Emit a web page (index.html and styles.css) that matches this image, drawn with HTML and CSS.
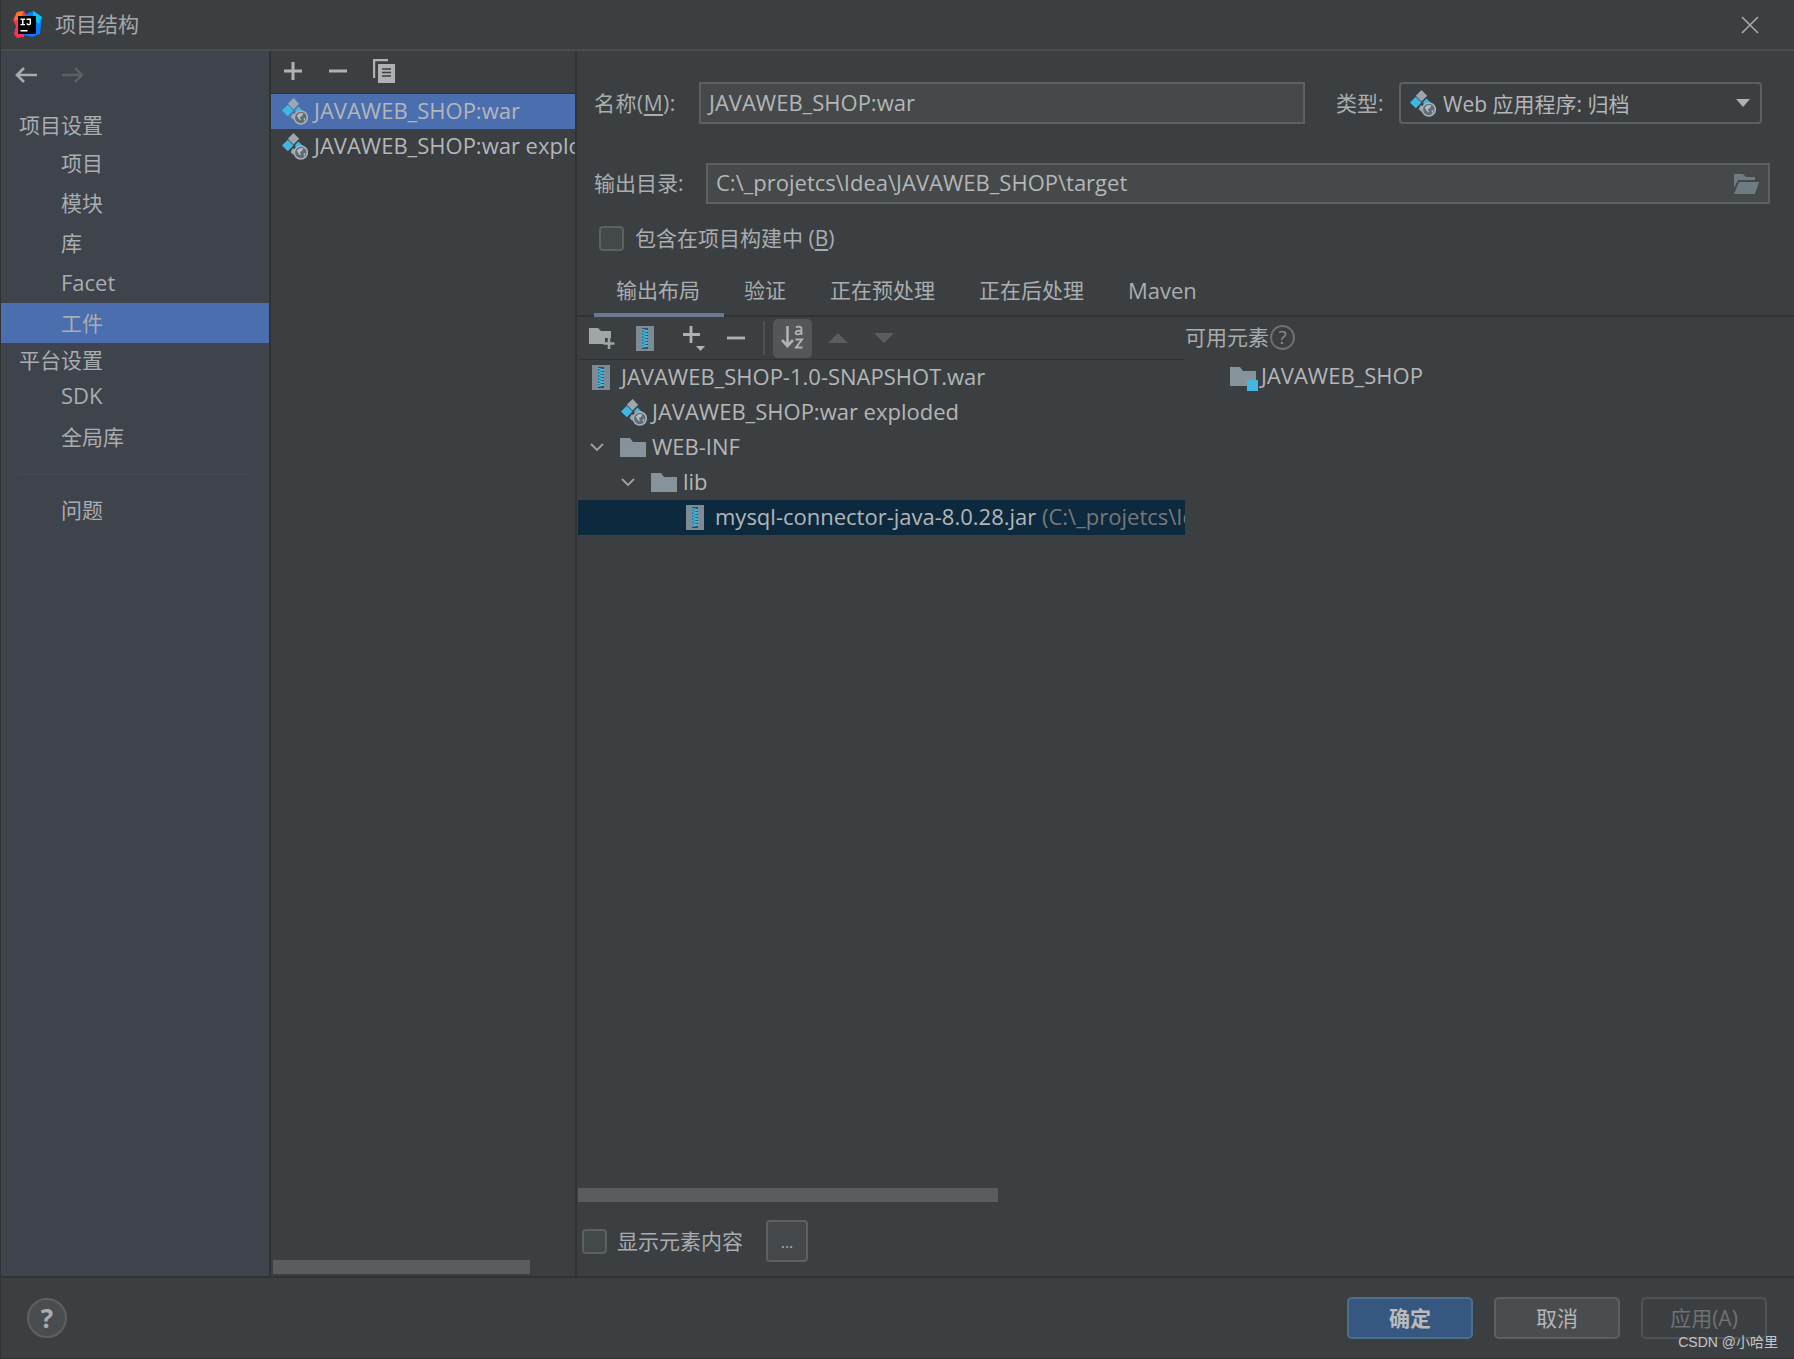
FILE: index.html
```html
<!DOCTYPE html>
<html lang="zh-CN">
<head>
<meta charset="utf-8">
<title>项目结构</title>
<link rel="stylesheet" href="styles.css">
</head>
<body>
<svg class="defs" width="0" height="0">
  <symbol id="artifact" viewBox="0 0 26 27">
    <path d="M11.500 0l5.700 5.700-5.700 5.700-5.700-5.700z" fill="#9aa7b0"/>
    <path d="M5.800 6.800l5.700 5.700-5.700 5.700L0 12.500z" fill="#40b6e0"/>
    <path d="M13 12l3.500-3.500 5.500 5.500c-3-1-6-.5-8 1z" fill="#40b6e0"/>
    <path d="M11 15l1.500 1.500-1 5.500-3-3z" fill="#9aa7b0"/>
    <circle cx="18.800" cy="19.500" r="6.500" fill="#5f6c77" stroke="#a6b1b9" stroke-width="1.600"/>
    <path d="M14.800 17.500l3-2.500 3.500.3-1.300 2.700-2 1 1 3.500-2.200-1.200zM21.500 20.500l2.200-.5-1.500 3.800z" fill="#b3bcc3"/>
  </symbol>
  <symbol id="jar" viewBox="0 0 18 25">
    <path d="M0 0h18v25H0z" fill="#7f8b94"/>
    <path d="M6 2h6v21H6z" fill="#3b4a55"/>
    <path d="M6 3.500l6 1.500-6 1.500 6 1.500-6 1.500 6 1.500-6 1.500 6 1.500-6 1.500 6 1.500-6 1.500 6 1.500-6 1" fill="none" stroke="#40b6e0" stroke-width="1.600"/>
  </symbol>
  <symbol id="folder" viewBox="0 0 26 19">
    <path d="M0 0h10l3 4h13v15H0z" fill="#87939a"/>
  </symbol>
  <symbol id="chev" viewBox="0 0 14 9">
    <path d="M1 1l6 6 6-6" fill="none" stroke="#9ea1a3" stroke-width="1.800"/>
  </symbol>
</svg>

<div class="window">
  <header class="titlebar">
    <svg class="logo" viewBox="0 0 29 27" width="29" height="27">
      <path d="M4 1l7-1 3 6-3 20-7 1-3-4 2-8-3-6z" fill="#fe315d"/>
      <path d="M1 9l3-8 6-1-2 9z" fill="#f97a12"/>
      <path d="M13 3l8-3 8 6-2 17-8 3-8-2z" fill="#087cfa"/>
      <path d="M20 0l9 6-3 7-6-5z" fill="#07c3f2"/>
      <path d="M5 5h18v18H5z" fill="#000"/>
      <path d="M7.500 7.500h4.500v1.400h-1.500v4H12v1.400H7.500v-1.400H9v-4H7.500zM13.500 7.500h4.500v5c0 1-.7 1.800-2.300 1.800s-2.200-.7-2.200-1.800l1.400-.3c0 .5.200.8.800.8s.9-.3.900-.8V8.900h-3.100zM7.500 19h7v1.400h-7z" fill="#fff"/>
    </svg>
    <span class="title-text">项目结构</span>
    <svg class="close" viewBox="0 0 18 18" width="18" height="18"><path d="M1 1l16 16M17 1L1 17" stroke="#a9abad" stroke-width="1.600"/></svg>
  </header>

  <div class="main">
    <nav class="sidebar">
      <div class="nav-arrows">
        <svg viewBox="0 0 24 18" width="24" height="18"><path d="M23 9H3M10 2L3 9l7 7" fill="none" stroke="#a9abad" stroke-width="2.600"/></svg>
        <svg viewBox="0 0 24 18" width="24" height="18"><path d="M1 9h20M14 2l7 7-7 7" fill="none" stroke="#5c5f61" stroke-width="2.600"/></svg>
      </div>
      <div class="nav-head nav-first">项目设置</div>
      <div class="nav-item">项目</div>
      <div class="nav-item">模块</div>
      <div class="nav-item">库</div>
      <div class="nav-item nav-latin">Facet</div>
      <div class="nav-item nav-selected">工件</div>
      <div class="nav-head nav-second">平台设置</div>
      <div class="nav-item nav-latin nav-sdk">SDK</div>
      <div class="nav-item nav-global">全局库</div>
      <div class="nav-sep"></div>
      <div class="nav-item">问题</div>
    </nav>

    <section class="artifacts">
      <div class="mini-toolbar">
        <svg viewBox="0 0 20 20" width="20" height="20"><path d="M10 1v18M1 10h18" stroke="#afb1b3" stroke-width="3"/></svg>
        <svg viewBox="0 0 20 20" width="20" height="20"><path d="M1 10h18" stroke="#afb1b3" stroke-width="3"/></svg>
        <svg viewBox="0 0 22 24" width="22" height="24"><path d="M1 19V1h14" fill="none" stroke="#afb1b3" stroke-width="2.400"/><path d="M5 5h17v19H5z" fill="#afb1b3"/><path d="M9 10h9M9 13.500h9M9 17h9" stroke="#3c3f41" stroke-width="1.600"/></svg>
      </div>
      <div class="artifact-list">
        <div class="artifact-row artifact-selected"><svg class="ico-art"><use href="#artifact"/></svg><span>JAVAWEB_SHOP:war</span></div>
        <div class="artifact-row"><svg class="ico-art"><use href="#artifact"/></svg><span>JAVAWEB_SHOP:war exploded</span></div>
      </div>
      <div class="scrollbar scroll-mid"></div>
    </section>

    <section class="details">
      <div class="form-row row-name">
        <label class="lbl lbl-name">名称(<u>M</u>):</label>
        <div class="field field-name"><span>JAVAWEB_SHOP:war</span></div>
        <label class="lbl lbl-type">类型:</label>
        <div class="combo"><svg class="ico-combo"><use href="#artifact"/></svg><span class="combo-text">Web 应用程序: 归档</span>
          <svg class="combo-arrow" viewBox="0 0 14 8" width="14" height="8"><path d="M0 0h14L7 8z" fill="#afb1b3"/></svg>
        </div>
      </div>
      <div class="form-row row-out">
        <label class="lbl lbl-out">输出目录:</label>
        <div class="field field-out"><span>C:\_projetcs\Idea\JAVAWEB_SHOP\target</span>
          <svg viewBox="0 0 26 20" width="26" height="20"><path d="M1 0h9l3 3h9v3H5L1 14z" fill="#6f7b82"/><path d="M6 8h20l-4 12H1z" fill="#6f7b82"/></svg>
        </div>
      </div>
      <div class="check-row row-include"><span class="checkbox"></span><span>包含在项目构建中 (<u>B</u>)</span></div>

      <div class="tabs">
        <div class="tab tab-active">输出布局</div>
        <div class="tab">验证</div>
        <div class="tab">正在预处理</div>
        <div class="tab">正在后处理</div>
        <div class="tab tab-latin">Maven</div>
      </div>

      <div class="split">
        <div class="layout-pane">
          <div class="layout-toolbar">
            <svg class="t-new" viewBox="0 0 26 22" width="26" height="22"><path d="M0 1h9l3 3h10v7h-6v6H0z" fill="#a0a5a8"/><path d="M20 11v11M14.500 16.500h11" stroke="#a0a5a8" stroke-width="2.600"/></svg>
            <svg class="t-jar"><use href="#jar"/></svg>
            <span class="t-add"><svg viewBox="0 0 24 26" width="24" height="26"><path d="M9 1v17M1 9.500h17" stroke="#afb1b3" stroke-width="2.800"/><path d="M14 21h9l-4.500 5z" fill="#afb1b3"/></svg></span>
            <svg class="t-minus" viewBox="0 0 18 4" width="18" height="4"><path d="M0 2h18" stroke="#afb1b3" stroke-width="2.800"/></svg>
            <span class="t-sep"></span>
            <span class="t-sort"><svg viewBox="0 0 24 26" width="24" height="26"><path d="M6.500 1v20M1 15l5.500 6 5.500-6" fill="none" stroke="#afb1b3" stroke-width="2.600"/><path d="M15 2.500c1-1 5.500-1.500 5.500 1.500v6M20 6c-2-.5-5.500-.3-5.500 1.800s4 2 5.500 0" fill="none" stroke="#afb1b3" stroke-width="1.800"/><path d="M14.500 14.500h6.500l-6 8h6.500" fill="none" stroke="#afb1b3" stroke-width="2"/></svg></span>
            <svg class="t-up" viewBox="0 0 20 10" width="20" height="10"><path d="M0 10L10 0l10 10z" fill="#5a5d5f"/></svg>
            <svg class="t-down" viewBox="0 0 20 10" width="20" height="10"><path d="M0 0l10 10L20 0z" fill="#5a5d5f"/></svg>
          </div>
          <div class="tree">
            <div class="tree-row level-war"><svg class="ico-jar"><use href="#jar"/></svg><span>JAVAWEB_SHOP-1.0-SNAPSHOT.war</span></div>
            <div class="tree-row level-exp"><svg class="ico-art-s"><use href="#artifact"/></svg><span>JAVAWEB_SHOP:war exploded</span></div>
            <div class="tree-row level-web"><svg class="ico-chev"><use href="#chev"/></svg><svg class="ico-folder"><use href="#folder"/></svg><span>WEB-INF</span></div>
            <div class="tree-row level-lib"><svg class="ico-chev"><use href="#chev"/></svg><svg class="ico-folder"><use href="#folder"/></svg><span>lib</span></div>
            <div class="tree-row level-jar tree-selected"><svg class="ico-jar"><use href="#jar"/></svg><span>mysql-connector-java-8.0.28.jar <em class="path">(C:\_projetcs\Idea\JAVAWEB_SHOP\target)</em></span></div>
          </div>
          <div class="scrollbar scroll-tree"></div>
          <div class="check-row row-show"><span class="checkbox"></span><span>显示元素内容</span><span class="dots-btn">...</span></div>
        </div>
        <div class="avail-pane">
          <div class="avail-head"><span>可用元素</span><span class="help-small">?</span></div>
          <div class="avail-row">
            <span class="avail-icon"><svg class="ico-folder"><use href="#folder"/></svg><span class="module-dot"></span></span>
            <span class="avail-name">JAVAWEB_SHOP</span>
          </div>
        </div>
      </div>
    </section>
  </div>

  <footer class="footer">
    <span class="help-btn">?</span>
    <div class="buttons">
      <span class="btn btn-ok">确定</span>
      <span class="btn btn-cancel">取消</span>
      <span class="btn btn-apply">应用(A)</span>
    </div>
    <span class="watermark">CSDN @小哈里</span>
  </footer>
</div>
</body>
</html>
```
FILE: styles.css
```css
* { box-sizing: border-box; }
html, body { margin: 0; padding: 0; }
body {
  width: 1794px;
  height: 1359px;
  overflow: hidden;
  background: #3c3f41;
  color: #a9adb0;
  font-family: "Open Sans", "Noto Sans CJK SC", sans-serif;
  font-size: 22px;
  line-height: 1;
}
.defs { position: absolute; }
svg { display: block; flex: none; }
u { text-underline-offset: 3px; }

.window {
  display: flex;
  flex-direction: column;
  width: 1794px;
  height: 1359px;
  border-left: 1px solid #323232;
  border-bottom: 1px solid #323232;
}

.titlebar {
  display: flex;
  align-items: center;
  height: 51px;
  flex: none;
  padding: 0 35px 0 12px;
  border-bottom: 2px solid #4c4c4c;
}
.title-text { margin-left: 13px; font-size: 21px; color: #a5a8aa; }
.close { margin-left: auto; }

.main { display: flex; height: 1225px; flex: none; }

.sidebar {
  width: 270px;
  flex: none;
  background: #3e434c;
  border-right: 2px solid #323232;
}
.nav-arrows {
  display: flex;
  gap: 23px;
  padding: 15px 0 0 13px;
  height: 56px;
}
.nav-head { height: 36px; padding-left: 18px; display: flex; align-items: center; font-size: 21px; }
.nav-second { height: 34px; }
.nav-item { height: 40px; padding-left: 60px; display: flex; align-items: center; font-size: 21px; }
.nav-latin { font-size: 22px; padding-bottom: 2px; }
.nav-sdk { height: 38px; }
.nav-global { height: 44px; }
.nav-selected { background: #4b6eaf; }
.nav-sep { height: 1px; margin: 15px 17px 15px 16px; background: #454a52; }

.artifacts {
  width: 306px;
  flex: none;
  display: flex;
  flex-direction: column;
  border-right: 2px solid #323232;
  min-width: 0;
}
.mini-toolbar {
  display: flex;
  align-items: center;
  gap: 25px;
  height: 43px;
  padding: 0 0 3px 12px;
  flex: none;
  border-bottom: 1px solid #323232;
}
.artifact-list { flex: 1; overflow: hidden; }
.artifact-row {
  display: flex;
  align-items: center;
  height: 35px;
  padding-left: 11px;
  white-space: nowrap;
  gap: 6px;
  overflow: hidden;
  color: #b4b6b8;
}
.artifact-row span { padding-bottom: 3px; }
.artifact-selected { background: #4b6eaf; }
.ico-art { width: 26px; height: 27px; }
.scrollbar { height: 14px; background: #5a5c5e; flex: none; }
.scroll-mid { width: 257px; margin: 0 0 2px 2px; }

.details { flex: 1; min-width: 0; display: flex; flex-direction: column; }
.form-row { display: flex; align-items: center; flex: none; }
.row-name { height: 42px; margin-top: 31px; }
.row-out { height: 41px; margin-top: 39px; }
.lbl { color: #a9adb0; white-space: nowrap; font-size: 21px; }
.lbl-name { margin-left: 17px; width: 105px; letter-spacing: .5px; }
.lbl-out { margin-left: 17px; width: 112px; }
.lbl-type { margin-left: 31px; width: 63px; }
.field {
  display: flex;
  align-items: center;
  background: #45494a;
  border: 2px solid #5e6060;
  padding: 0 8px;
  height: 100%;
  color: #b4b6b8;
  white-space: nowrap;
}
.field span { padding-bottom: 3px; }
.field-name { width: 606px; }
.field-out { width: 1064px; justify-content: space-between; padding-right: 9px; }
.combo {
  display: flex;
  align-items: center;
  width: 363px;
  height: 100%;
  border: 2px solid #5e6060;
  border-radius: 4px;
  padding: 0 9px 0 9px;
  color: #b4b6b8;
  white-space: nowrap;
}
.combo-text { font-size: 21px; padding-top: 2px; }
.ico-combo { width: 26px; height: 27px; margin-right: 7px; }
.combo-arrow { margin-left: auto; margin-right: 1px; }

.check-row { display: flex; align-items: center; flex: none; white-space: nowrap; font-size: 21px; }
.checkbox {
  width: 25px;
  height: 25px;
  flex: none;
  border: 2px solid #5e6060;
  border-radius: 4px;
  background: #43494a;
}
.row-include { height: 25px; margin: 22px 0 0 22px; gap: 11px; }

.tabs {
  display: flex;
  height: 47px;
  margin-top: 19px;
  flex: none;
  padding-left: 17px;
  border-bottom: 2px solid #323232;
}
.tab { padding: 10px 22px 0; height: 45px; font-size: 21px; white-space: nowrap; }
.tab-latin { font-size: 22px; padding-top: 9px; }
.tab-active { border-bottom: 4px solid #687a8f; height: 47px; padding-right: 24px; margin-right: -2px; }

.split { flex: 1; display: flex; min-height: 0; }
.layout-pane { width: 608px; flex: none; display: flex; flex-direction: column; min-width: 0; padding-left: 1px; }
.layout-toolbar {
  display: flex;
  align-items: center;
  height: 43px;
  flex: none;
  padding-left: 11px;
  border-bottom: 1px solid #323232;
}
.t-jar { width: 18px; height: 25px; margin-left: 21px; }
.t-add { margin-left: 28px; }
.t-minus { margin-left: 21px; }
.t-sep { width: 2px; height: 34px; background: #4e5052; margin-left: 18px; }
.t-sort {
  display: flex;
  align-items: center;
  justify-content: center;
  width: 39px;
  height: 39px;
  margin-left: 8px;
  background: #54575a;
  border-radius: 5px;
}
.t-up { margin-left: 16px; }
.t-down { margin-left: 26px; }

.tree { flex: 1; min-height: 0; }
.tree-row {
  display: flex;
  align-items: center;
  height: 35px;
  white-space: nowrap;
  overflow: hidden;
  color: #b4b6b8;
}
.tree-row span { padding-bottom: 4px; }
.ico-jar { width: 18px; height: 25px; margin-right: 11px; }
.ico-art-s { width: 26px; height: 27px; margin-right: 5px; }
.ico-chev { width: 14px; height: 9px; margin-right: 16px; }
.ico-folder { width: 26px; height: 19px; margin-right: 6px; }
.level-war { padding-left: 14px; }
.level-exp { padding-left: 43px; }
.level-web { padding-left: 12px; }
.level-lib { padding-left: 43px; }
.level-jar { padding-left: 108px; }
.tree-selected { background: #0d293e; }
.path { font-style: normal; color: #787878; }

.scroll-tree { width: 420px; }
.row-show { height: 74px; padding: 4px 0 0 4px; gap: 10px; }
.dots-btn {
  display: flex;
  align-items: flex-end;
  justify-content: center;
  width: 42px;
  height: 42px;
  margin-left: 13px;
  padding-bottom: 10px;
  font-size: 16px;
  background: #45484a;
  border: 2px solid #5e6060;
  border-radius: 4px;
}

.avail-pane { flex: 1; min-width: 0; }
.avail-head { display: flex; align-items: center; height: 41px; gap: 1px; font-size: 21px; }
.help-small {
  display: flex;
  align-items: center;
  justify-content: center;
  width: 25px;
  height: 25px;
  border: 2px solid #6e7072;
  border-radius: 50%;
  font-size: 19px;
  color: #8a8d8f;
}
.avail-row { display: flex; align-items: center; height: 35px; margin-top: 1px; padding-left: 45px; color: #b4b6b8; }
.avail-name { padding-bottom: 3px; }
.avail-icon { position: relative; display: block; width: 31px; flex: none; }
.module-dot {
  position: absolute;
  right: 3px;
  bottom: -5px;
  width: 11px;
  height: 11px;
  background: #40b6e0;
}

.footer {
  position: relative;
  flex: none;
  height: 82px;
  display: flex;
  align-items: center;
  padding: 0 27px 0 26px;
  border-top: 2px solid #323232;
}
.help-btn {
  display: flex;
  align-items: center;
  justify-content: center;
  width: 40px;
  height: 40px;
  border: 2px solid #5e6060;
  border-radius: 50%;
  background: #4a4d4f;
  font-size: 26px;
  font-weight: 700;
  color: #a9adb0;
}
.buttons { margin-left: auto; display: flex; gap: 21px; }
.btn {
  display: flex;
  align-items: center;
  justify-content: center;
  width: 126px;
  height: 42px;
  border: 2px solid #5e6060;
  border-radius: 5px;
  font-size: 21px;
  white-space: nowrap;
}
.btn-ok { background: #365880; border-color: #4c708c; font-weight: 700; color: #bbbbbb; }
.btn-cancel { background: #4a4d4f; color: #b4b6b8; }
.btn-apply { color: #6f7274; border-color: #505355; }
.watermark {
  position: absolute;
  right: 16px;
  bottom: 9px;
  font-family: "Liberation Sans", "Noto Sans CJK SC", sans-serif;
  font-size: 14px;
  color: #c4c6c8;
}
```
